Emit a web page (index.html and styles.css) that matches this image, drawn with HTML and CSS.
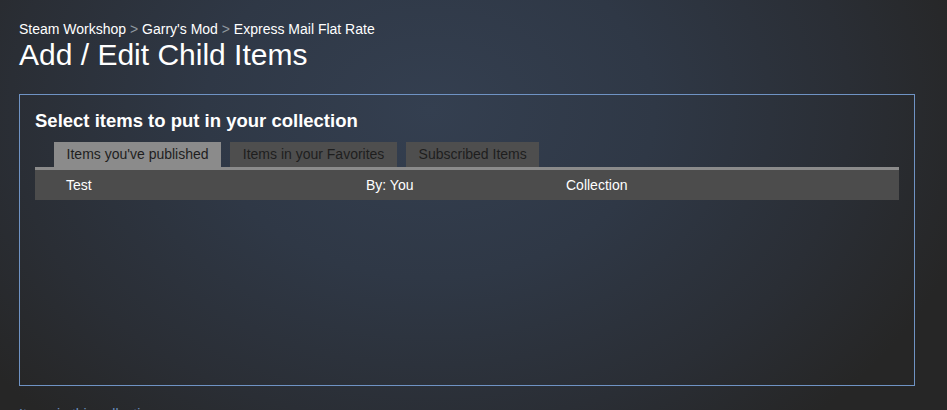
FILE: index.html
```html
<!DOCTYPE html>
<html>
<head>
<meta charset="utf-8">
<link rel="stylesheet" href="styles.css">
</head>
<body>
<div class="page">
  <div class="crumbs"><a>Steam Workshop</a> <span class="sep">&gt;</span> <a>Garry's Mod</a> <span class="sep">&gt;</span> <a>Express Mail Flat Rate</a></div>
  <h1 class="title">Add / Edit Child Items</h1>
  <div class="box">
    <h2 class="box-title">Select items to put in your collection</h2>
    <div class="tabs">
      <div class="tab active">Items you've published</div>
      <div class="tab">Items in your Favorites</div>
      <div class="tab">Subscribed Items</div>
    </div>
    <div class="list">
      <div class="row">
        <span class="c-name">Test</span>
        <span class="c-by">By: You</span>
        <span class="c-type">Collection</span>
      </div>
    </div>
  </div>
  <div class="footer-label">Items in this collection</div>
</div>
</body>
</html>
```
FILE: styles.css
```css
html, body {
  margin: 0;
  padding: 0;
  height: 100%;
}
body {
  background: #262626;
  background-image: radial-gradient(ellipse 560px 420px at 430px 110px, #343f50 0%, #2f3846 40%, #2a2e35 75%, #262626 100%);
  font-family: "Liberation Sans", Arial, sans-serif;
  color: #fff;
  overflow: hidden;
}
.page {
  padding: 21px 0 0 19px;
  width: 896px;
}
.crumbs {
  font-size: 14px;
  line-height: 17px;
  color: #fff;
}
.crumbs .sep {
  color: #8f98a0;
}
.title {
  margin: 0;
  font-weight: normal;
  font-size: 30px;
  line-height: 34px;
}
.box {
  box-sizing: border-box;
  margin-top: 22px;
  border: 1px solid #6f93c4;
  height: 292px;
  padding: 15px 15px 0 15px;
}
.box-title {
  margin: 0;
  font-size: 18.5px;
  line-height: 22px;
  font-weight: bold;
  color: #fff;
}
.tabs {
  display: flex;
  gap: 9px;
  padding-left: 19px;
  margin-top: 10px;
}
.tab {
  height: 25px;
  line-height: 25px;
  padding: 0 12.6px;
  font-size: 14px;
  color: #1e1e1e;
  background: #4e4e4e;
}
.tab.active {
  background: #8b8b8b;
}
.list {
  border-top: 3px solid #8b8b8b;
}
.row {
  display: grid;
  grid-template-columns: 300px 200px 1fr;
  height: 30px;
  align-items: center;
  padding-left: 31px;
  background: #4c4c4c;
  font-size: 14px;
  color: #fff;
}
.footer-label {
  margin-top: 20px;
  font-size: 14px;
  color: #6a8fc0;
}
```
